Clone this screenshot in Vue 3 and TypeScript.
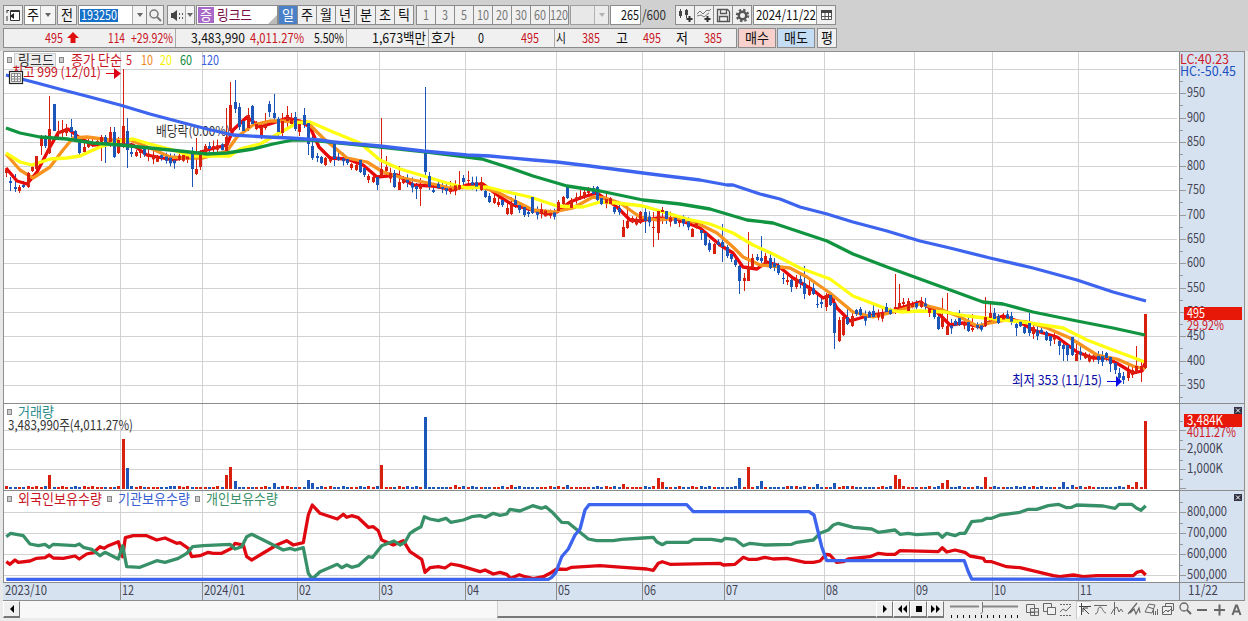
<script setup lang="ts">
import { h } from 'vue'

/* Compact label: one line of text fitted to a fixed advance width */
const Lbl = (p: { s: string; w: number; c?: string }) =>
  h('svg', { class: 'lbl', width: p.w, height: 16, viewBox: `0 0 ${p.w} 16` }, [
    h('text', { x: 0, y: 13, fill: p.c ?? '#111', textLength: p.w, lengthAdjust: 'spacingAndGlyphs' }, p.s),
  ])
Lbl.props = ['s', 'w', 'c']

const RED = '#d8200f'
const BLUE = '#1c56b8'
type Pt = [number, number]

const pairs = (src: string): Pt[] => src.trim().split(/\s+/).map(p => p.split(',').map(Number) as Pt)

/* ---------- grid ---------- */
const gridX = [120, 202, 297, 379, 465, 556, 642, 724, 824, 914, 992, 1078]
const months = ['12', '2024/01', '02', '03', '04', '05', '06', '07', '08', '09', '10', '11']
const gridY = [69, 93, 118, 142, 166, 190, 215, 239, 263, 288, 312, 336, 361, 385]
const prices = gridY.slice(1).map((y, i) => ({ y, v: String(950 - i * 50) }))
const minorY = gridY.map(y => y + 12)
const holdY = [512, 533, 554, 575]

/* ---------- moving averages ---------- */
const ma5 = '6,168 17,181 27,184 37,172 50,147 58,133 68,129 80,138 93,145 110,143 120,145 133,145 147,155 173,160 187,157 207,150 227,145 233,130 247,117 260,127 273,123 287,118 300,121 310,127 319,147 330,158 347,159 363,165 377,177 397,175 413,185 433,186 453,190 467,185 483,184 500,197 513,205 547,214 557,212 570,202 583,197 597,193 617,207 630,220 640,221 657,218 677,219 700,228 720,245 733,253 743,267 757,269 767,262 777,265 793,278 813,290 823,298 830,295 837,308 850,321 867,316 887,313 900,308 920,302 937,312 950,325 963,323 980,327 997,318 1003,316 1020,322 1033,330 1057,337 1077,352 1093,358 1107,358 1120,365 1133,373 1142,371 1145,363'
const ma10 = '6,154 20,170 33,178 50,167 63,150 73,138 87,137 110,140 130,140 150,148 170,157 187,158 203,158 227,151 237,137 253,125 270,121 283,121 297,122 307,122 323,138 347,158 367,162 383,172 403,178 433,184 450,188 480,187 497,192 517,202 533,210 553,212 573,208 593,197 605,198 620,203 640,217 657,220 677,218 697,223 717,233 733,247 743,257 760,265 790,268 807,277 830,293 853,312 873,317 893,312 920,304 940,309 960,317 977,326 990,323 1007,320 1027,322 1047,328 1070,338 1097,355 1117,359 1133,366 1145,369'
const ma20 = '6,153 20,162 32,165 50,159 67,158 80,156 100,147 120,141 133,139 150,144 173,150 190,156 207,156 230,156 240,149 260,144 283,131 297,123 310,122 333,132 360,143 380,160 400,169 427,177 447,183 467,188 487,187 503,191 530,197 557,206 583,207 600,202 617,203 643,206 667,213 687,219 710,224 733,233 753,245 773,254 800,268 830,279 853,296 887,309 900,312 920,311 945,312 967,316 985,318 1003,320 1023,322 1043,325 1063,328 1087,340 1113,350 1145,362'
const ma60 = '6,128 20,133 40,137 67,139 93,143 120,145 150,148 180,151 207,154 227,153 253,149 273,144 293,140 310,140 380,147 427,152 467,157 482,159 507,167 533,176 567,186 600,191 643,200 680,204 710,209 747,220 773,223 800,232 827,241 853,254 887,267 920,279 953,291 983,302 1003,304 1033,312 1077,321 1113,328 1145,335'
const ma120 = '6,75 37,83 63,90 90,97 120,105 150,114 180,122 207,129 233,135 267,137 290,138 320,140 333,142 380,146 423,151 467,155 490,156 533,160 557,162 590,166 643,173 667,176 700,180 727,185 733,185 760,194 780,199 800,207 827,214 853,222 887,231 920,241 950,248 990,258 1033,268 1077,280 1113,292 1146,301'
const averages = [
  { pts: ma5, color: '#e80808' },
  { pts: ma10, color: '#f7931e' },
  { pts: ma20, color: '#ffff10' },
  { pts: ma60, color: '#109440' },
  { pts: ma120, color: '#3c64ee' },
]

/* ---------- candles ---------- */
const COUNT = 265
const slotX = (i: number) => 6.1 + i * 4.314
const slotOf = (x: number) => Math.round((x - 6.1) / 4.314)

/* x high top bottom low, r = up day, b = down day */
const marked = `
6 168 170 173 177 r;11 177 181 183 191 b;15 174 187 189 192 b;19 185 187 191 193 r;23 181 185 187 188 b;28 172 173 187 188 r;32 165 167 171 172 r;36 156 156 169 170 r
41 135 136 146 155 r;45 135 137 146 148 b;49 96 129 153 154 r;54 104 104 131 131 b;58 121 131 134 138 r;62 120 130 133 137 r;67 124 128 133 136 r;71 119 127 132 137 b
75 130 131 140 142 b;80 138 140 153 155 b;84 143 147 152 153 r;88 137 141 147 148 r;92 138 142 145 147 r;97 138 141 145 147 r;101 135 137 143 161 r;105 135 137 143 163 b
109 127 132 142 147 r;114 127 132 157 158 b;118 137 140 153 154 r;123 69 126 147 148 r;127 118 131 150 168 b;131 143 152 154 157 b;136 150 152 156 157 r;140 150 151 153 158 r
192 147 151 169 187 b;196 138 169 174 175 r;200 150 153 167 170 r;204 144 146 153 156 r;209 142 146 149 153 b;226 108 137 151 152 r;231 82 105 131 132 r;235 80 102 109 113 b
239 103 107 127 130 b;243 118 121 131 133 b;248 108 115 128 131 r;252 105 106 124 127 b;257 121 124 129 130 r;261 124 126 137 139 r;265 113 124 128 130 r;269 101 104 112 117 b
274 94 113 118 122 b;278 117 119 132 137 b;282 113 121 133 137 r;286 106 115 121 127 r;291 113 118 124 127 r;295 112 117 129 131 b;299 121 124 132 136 r;304 108 115 125 128 b
308 122 123 144 155 b;312 133 146 158 160 b;317 153 156 158 162 b;321 156 157 163 164 b;325 157 158 165 166 r;334 142 143 159 166 b;339 149 157 160 161 b;347 157 159 163 165 b
351 163 164 168 170 r;356 162 165 170 171 r;360 159 160 172 173 b;364 166 168 175 177 b;368 174 176 180 183 r;373 175 177 182 183 r;377 176 177 185 190 b;381 118 169 177 178 r
386 156 167 171 175 r;394 170 173 187 188 b;398 166 182 190 190 r;403 176 179 183 184 r;416 183 186 189 199 b;420 178 185 189 206 r;425 87 153 172 177 b;429 172 176 187 190 b
433 186 190 192 193 b;442 181 187 189 193 b;451 181 188 192 194 r;459 171 185 189 190 r;464 175 178 182 186 b;468 171 180 181 184 r;481 177 182 190 191 r;486 189 191 197 198 b
490 193 196 202 203 b;494 193 198 203 204 r;498 198 202 205 207 r;502 198 200 205 207 b;507 203 208 214 215 r;511 197 203 214 215 r;515 195 200 205 208 b;519 202 205 210 213 b
524 204 207 215 217 b;528 210 212 214 217 b;533 197 197 213 214 b;559 200 202 211 213 r;563 196 197 204 206 r;568 186 186 198 199 b;572 198 200 208 209 r;580 190 196 199 200 r
584 188 192 197 199 r;588 187 188 193 197 r;593 186 188 194 196 b;597 186 187 200 201 b;601 197 198 204 205 b;614 204 207 212 214 b;623 220 227 237 237 r;628 205 221 228 229 r
640 211 212 223 224 r;644 207 212 221 233 b;654 212 227 228 247 r;658 210 211 233 240 r;662 207 210 212 224 r;666 211 211 219 224 b;679 215 220 223 227 r;692 228 229 237 237 r
701 228 230 233 240 b;705 232 233 245 246 b;709 240 243 250 252 b;713 243 244 254 254 r;722 224 242 247 262 b;726 245 247 256 258 b;731 252 254 259 262 b;735 257 260 265 267 b
739 265 266 281 294 b;744 273 278 281 291 r;748 232 267 281 281 r;752 254 258 268 269 r;757 254 257 260 261 b;761 236 258 261 263 b;765 253 256 264 266 r;769 251 258 268 269 b
778 263 265 273 275 b;783 273 278 279 284 b;787 275 280 282 285 r;791 278 280 287 292 b;796 275 279 287 289 r;804 266 283 294 299 b;808 278 288 295 296 r;813 283 288 294 295 b
817 294 304 305 308 b;822 297 302 304 308 b;826 293 295 307 311 r;830 295 295 305 306 b;834 298 303 333 349 b;838 317 320 341 342 r;843 316 317 335 336 r;847 307 317 324 325 b
851 312 316 326 327 r;856 309 310 314 316 b;860 307 309 315 316 b;873 303 311 317 318 b;886 303 307 312 313 b;895 274 307 309 314 r;900 284 303 308 309 r;904 298 302 304 308 r
908 298 301 311 312 r;921 297 301 307 308 r;930 306 309 313 317 r;934 308 310 317 319 b;938 313 317 329 330 b;942 298 318 327 329 r;947 293 326 335 335 r;960 310 318 325 326 b
968 317 322 331 332 b;973 314 328 330 332 r;985 297 317 326 327 r;990 303 313 318 320 r;995 308 313 319 320 b;999 314 316 323 324 b;1016 320 324 328 336 b;1024 324 327 333 334 b
1029 313 323 333 336 b;1033 323 327 334 339 r;1046 331 332 340 341 b;1050 334 336 341 346 b;1059 337 341 346 355 b;1064 343 345 349 361 b;1068 343 345 355 361 b;1072 337 337 355 356 b
1077 344 354 361 361 r;1107 352 353 358 361 b;1111 356 357 364 372 b;1115 361 363 370 374 b;1119 368 373 378 382 b;1123 372 376 380 384 b;1128 365 371 378 381 r;1132 366 370 375 378 r;1137 346 366 373 374 r;1141 362 366 370 382 r;1145 314 314 368 369 r`

interface Candle { x: number; hi: number; top: number; bot: number; lo: number; up: boolean }

const shortTerm = pairs(ma5)
const trendAt = (x: number) => {
  const k = Math.max(1, shortTerm.findIndex(p => p[0] >= x))
  const [a, b] = [shortTerm[k - 1], shortTerm[k]]
  return a[1] + ((b[1] - a[1]) * (x - a[0])) / (b[0] - a[0])
}
const candles: Candle[] = Array.from({ length: COUNT }, (_, i) => {
  const x = Math.round(slotX(i))
  const mid = trendAt(Math.min(1144, x)) + ((i * 5) % 4) - 1
  const half = 1.5 + ((i * 7) % 3) * 0.7
  const reach = 4 + ((i * 11) % 5)
  return { x, hi: mid - reach, top: mid - half, bot: mid + half, lo: mid + reach - 1, up: (i * 13) % 7 < 3 }
})
marked.trim().split(/[;\n]/).forEach(row => {
  const [x, hi, top, bot, lo, kind] = row.split(' ')
  const i = Math.min(COUNT - 1, slotOf(+x))
  candles[i] = { x: Math.round(slotX(i)), hi: +hi, top: +top, bot: +bot, lo: +lo, up: kind === 'r' }
})

/* ---------- volume ---------- */
const peaks = pairs('50,475 123,439 127,468 226,475 231,467 235,481 274,483 308,480 312,483 381,465 425,417 624,484 658,478 662,482 739,478 748,467 761,481 817,484 834,483 895,475 900,479 942,483 947,480 985,477 1064,482 1137,482 1145,421')
const peakTop = new Map(peaks.map(([x, y]) => [slotOf(x), y]))
const volumes = candles.map((c, i) => {
  const top = peakTop.get(i) ?? 487 - ((i * 17) % 11 > 7 ? 1 : 0) - ((i * 5) % 13 === 0 ? 1 : 0)
  return { x: c.x, top, h: 489 - top, up: c.up }
})

/* ---------- holdings (third-pixel units, three consecutive windows) ---------- */
const join = (a: string, b: string, c: string) =>
  [a, b, c].flatMap((s, k) => pairs(s).map(([x, y]) => `${((x + k * 1230) / 3).toFixed(1)},${(400 + y / 3).toFixed(1)}`)).join(' ')
const foreign = join(
  '19,485 30,493 45,480 55,487 90,483 110,475 135,473 148,465 160,474 190,475 225,468 238,477 260,462 280,458 300,440 312,445 325,437 355,425 368,470 376,413 400,407 440,407 470,420 495,414 530,430 540,428 565,445 575,470 600,467 625,457 640,460 665,460 695,445 705,430 730,435 740,470 755,480 780,465 830,435 860,422 880,435 910,428 925,345 937,315 960,340 1012,357 1030,343 1040,352 1055,347 1075,353 1105,382 1120,380 1135,392 1145,420 1180,435 1210,422',
  '0,455 35,478 45,517 60,503 85,500 105,504 123,492 150,497 210,515 225,510 250,522 270,517 290,523 302,535 328,524 345,530 370,536 400,530 420,520 440,507 470,508 485,502 570,497 640,502 710,507 730,511 745,490 757,485 780,493 930,490 940,495 975,493 1000,472 1015,478 1040,478 1065,472 1090,477 1130,475 1185,487 1210,487',
  '0,483 18,463 30,465 50,487 70,485 85,477 150,470 175,460 200,463 225,463 240,452 355,455 367,443 380,456 405,450 435,457 450,468 490,475 495,484 515,485 560,500 600,503 700,527 720,530 760,525 790,530 830,527 940,527 950,517 965,513 977,525')
const retail = join(
  '19,410 32,400 70,407 90,432 115,437 135,433 148,442 160,433 225,437 238,432 250,442 275,448 300,467 315,457 355,477 368,437 380,500 420,502 470,482 495,487 535,475 560,460 578,440 610,437 690,433 705,447 725,440 740,410 755,403 820,435 850,450 870,445 885,450 910,443 925,520 937,537 960,515 1012,493 1025,503 1040,495 1055,502 1075,497 1105,470 1118,472 1145,437 1182,423 1200,435 1215,427',
  '0,400 15,390 33,380 43,350 60,357 85,362 108,355 122,367 160,360 185,350 210,347 227,352 250,340 270,346 290,342 300,328 330,333 368,317 395,325 407,320 425,335 455,367 475,368 535,417 560,422 610,422 635,418 700,414 730,412 740,425 757,434 770,427 835,427 850,418 905,418 935,423 945,415 975,418 1000,437 1020,430 1065,435 1145,433 1160,427 1210,420',
  '0,400 25,390 40,375 55,370 100,382 155,387 175,397 225,390 240,403 265,400 290,404 355,400 367,412 380,400 405,407 420,400 435,400 455,365 485,362 500,355 515,355 540,345 600,337 625,328 650,328 685,317 715,313 740,323 755,322 770,315 850,318 885,325 897,313 935,313 950,325 963,331 977,317')
const institution = join('19,538 1200,538', '415,538 425,532 438,517 455,470 475,447 495,405 510,387 525,330 537,314 830,314 850,335 1197,335 1212,345', '5,440 20,482 433,482 445,515 455,537 977,538')

const minutes = ['1', '3', '5', '10', '20', '30', '60', '120']
const sliderTicks = Array.from({ length: 12 }, (_, i) => 2 + i * 6)
</script>

<template>
  <main class="app">
    <header class="tools">
      <button class="btn w19"><svg width="15" height="14"><path d="M1 2v3m0 3v5M1 2.5h2" stroke="#333" /><path d="M4.5 2.500h9v10h-9z M5 3.500h8" fill="#fff" stroke="#333" /><path d="M8 5v6L4 8z" fill="#222" /></svg></button>
      <div class="btn combo"><span class="c17"><Lbl s="주" :w="12" /></span><span class="drop"><i class="tri" /></span></div>
      <button class="btn w19 g1"><Lbl s="전" :w="12" /></button>
      <div class="btn code"><span class="sel"><Lbl s="193250" :w="36" c="#fff" /></span><span class="drop end"><i class="tri" /></span></div>
      <button class="btn w17"><svg width="13" height="13"><circle cx="5" cy="5" r="4" fill="none" stroke="#777" stroke-width="1.500" /><path d="M8 8l4 4" stroke="#777" stroke-width="2" /></svg></button>
      <button class="btn speak"><svg width="14" height="13"><path d="M1 4h2l4-3v11L3 9H1z" fill="#444" /><path d="M9.500 4v2m0 2v2M12.500 4v2m0 2v2" stroke="#555" /></svg><span class="drop sm"><i class="tri" /></span></button>
      <div class="btn name"><b><Lbl s="증" :w="12" c="#fff" /></b><Lbl s="링크드" :w="35" c="#7a0c46" /><i class="corner" /></div>
      <nav class="seg first"><button class="on"><Lbl s="일" :w="12" c="#fff" /></button><button v-for="p in ['주', '월', '년']" :key="p"><Lbl :s="p" :w="12" /></button></nav>
      <nav class="seg"><button v-for="p in ['분', '초', '틱']" :key="p"><Lbl :s="p" :w="12" /></button></nav>
      <nav class="seg off"><button v-for="m in minutes" :key="m"><Lbl :s="m" :w="m.length * 6" c="#777" /></button></nav>
      <div class="btn blank"><span class="drop end"><i class="tri" /></span></div>
      <div class="btn count"><Lbl s="265" :w="18" /></div>
      <Lbl class="total" s="/600" :w="24" c="#333" />
      <nav class="seg icons">
        <button><svg width="16" height="15"><path d="M3.500 1v9M9.500 1v9" stroke="#444" /><path d="M2 3h3v5H2zM8 2h3v5H8z" fill="#444" /><path d="M12.500 8v6M9.500 11h6" stroke="#333" stroke-width="2" /></svg></button>
        <button><svg width="16" height="15" fill="none"><path d="M1 6l3-3 3 3 4-4 2 1 2-2M1 8l4-1 3 2 5-4" stroke="#777" /><path d="M11.500 8v6M8.500 11h6" stroke="#333" stroke-width="2" /></svg></button>
        <button><svg width="15" height="15" fill="none" stroke="#555" stroke-width="1.300"><path d="M1.500 1.500h10l2 2v10h-12zM4.500 1.500v4h6v-4M3.500 13.500v-5h8v5" /></svg></button>
        <button><svg width="15" height="15" fill="none" stroke="#555"><circle cx="7.500" cy="7.500" r="3.700" stroke-width="2.400" /><circle cx="7.500" cy="7.500" r="5.700" stroke-width="2" stroke-dasharray="2.300 2.180" /></svg></button>
      </nav>
      <div class="btn date"><Lbl s="2024/11/22" :w="60" /><span class="cal"><svg width="13" height="12"><path d="M1.500 1.500h10v9h-10zM1.500 7.500h10M5 4v6M8.500 4v6" fill="#fff" stroke="#555" /><path d="M1 1h11v3H1z" fill="#444" /></svg></span></div>
    </header>

    <section class="quote">
      <div class="cells">
        <span><Lbl s="495" :w="18" c="#c8141e" /></span>
        <span><svg width="14" height="14"><path d="M7 1l6 6H9.500v5h-5V7H1z" fill="#e01010" /></svg></span>
        <span><Lbl s="114" :w="17" c="#c8141e" /></span>
        <span class="pr2"><Lbl s="+29.92%" :w="42" c="#c8141e" /></span>
        <span class="rule"><Lbl s="3,483,990" :w="54" /></span>
        <span><Lbl s="4,011.27%" :w="54" c="#c8141e" /></span>
        <span class="pr2"><Lbl s="5.50%" :w="30" /></span>
        <span class="rule pr2"><Lbl s="1,673백만" :w="54" /></span>
        <span class="rule"><Lbl s="호가" :w="24" /></span>
        <span><Lbl s="0" :w="6" /></span>
        <span class="pr15"><Lbl s="495" :w="18" c="#c8141e" /></span>
        <span class="rule"><Lbl s="시" :w="10" /></span>
        <span><Lbl s="385" :w="18" c="#c8141e" /></span>
        <span><Lbl s="고" :w="12" /></span>
        <span><Lbl s="495" :w="18" c="#c8141e" /></span>
        <span><Lbl s="저" :w="12" /></span>
        <span><Lbl s="385" :w="18" c="#c8141e" /></span>
      </div>
      <button class="btn buy"><Lbl s="매수" :w="24" /></button>
      <button class="btn ask"><Lbl s="매도" :w="24" /></button>
      <button class="btn w19 eval"><Lbl s="평" :w="12" /></button>
    </section>

    <section class="charts">
      <svg class="panel" width="1241" height="352" viewBox="3 52 1241 352">
        <rect x="1179" y="52" width="65" height="352" class="axis" />
        <path class="grid" :d="gridY.map(y => `M4 ${y + .5}H1177`).join('') + gridX.map(x => `M${x + .5} 52V403`).join('')" />
        <path class="tick" :d="prices.map(p => `M1180 ${p.y + .5}h6`).join('') + minorY.map(y => `M1180 ${y + .5}h3`).join('')" />
        <text x="156" y="136" textLength="74" fill="#333" lengthAdjust="spacingAndGlyphs">배당락(0.00%)</text>
        <g v-for="(c, i) in candles" :key="i" :fill="c.up ? RED : BLUE">
          <rect :x="c.x" :y="c.hi" width="1" :height="c.lo - c.hi" />
        </g>
        <polyline v-for="m in averages.slice(0, 3)" :key="m.color" class="ma" :points="m.pts" :stroke="m.color" />
        <g v-for="(c, i) in candles" :key="'b' + i" :fill="c.up ? RED : BLUE">
          <rect :x="c.x - 1" :y="c.top" width="3" :height="c.bot - c.top" />
        </g>
        <polyline v-for="m in averages.slice(3)" :key="m.color" class="ma" :points="m.pts" :stroke="m.color" />
        <g class="bullet"><rect x="7.500" y="57.500" width="4" height="5" /><rect x="59.500" y="57.500" width="4" height="5" /></g>
        <rect x="14.500" y="53.500" width="41" height="13" fill="#eee" stroke="#ccc" />
        <text x="18" y="65" textLength="36" lengthAdjust="spacingAndGlyphs" fill="#333">링크드</text>
        <text x="71" y="65" textLength="51" lengthAdjust="spacingAndGlyphs" fill="#c8141e">종가 단순</text>
        <text x="126" y="65" textLength="6" lengthAdjust="spacingAndGlyphs" fill="#c8141e">5</text>
        <text x="141" y="65" textLength="12" lengthAdjust="spacingAndGlyphs" fill="#f08820">10</text>
        <text x="160" y="65" textLength="12" lengthAdjust="spacingAndGlyphs" fill="#f7f200">20</text>
        <text x="180" y="65" textLength="12" lengthAdjust="spacingAndGlyphs" fill="#108a38">60</text>
        <text x="201" y="65" textLength="18" lengthAdjust="spacingAndGlyphs" fill="#3860e0">120</text>
        <text x="12" y="77" textLength="89" lengthAdjust="spacingAndGlyphs" fill="#c8141e">최고 999 (12/01)</text>
        <path d="M106 73h8v-5l7 5.500-7 5.500v-5h-8z" fill="#e00018" />
        <rect x="9.500" y="71.500" width="13" height="12" fill="#f4f4f4" stroke="#222" stroke-width="1.200" />
        <path d="M11.500 73.500h9v8h-9zM14.500 73.500v8M17.500 73.500v8M11.500 76.500h9M11.500 79h9" fill="none" stroke="#888" />
        <text x="1012" y="385" textLength="90" lengthAdjust="spacingAndGlyphs" fill="#0a0aa8">최저 353 (11/15)</text>
        <path d="M1107 381h9v-5l6 5.500-6 5.500v-5h-9z" fill="#0808e8" />
        <text v-for="p in prices" :key="p.v" x="1187" :y="p.y + 4" textLength="18" lengthAdjust="spacingAndGlyphs" fill="#445">{{ p.v }}</text>
        <rect x="1184" y="307" width="58" height="13" fill="#e81808" />
        <text x="1187" y="318" textLength="18" lengthAdjust="spacingAndGlyphs" fill="#fff">495</text>
        <text x="1187" y="330" textLength="37" lengthAdjust="spacingAndGlyphs" fill="#d01828">29.92%</text>
        <text x="1180" y="64" textLength="49" lengthAdjust="spacingAndGlyphs" fill="#d01828">LC:40.23</text>
        <text x="1180" y="76" textLength="56" lengthAdjust="spacingAndGlyphs" fill="#1c50c0">HC:-50.45</text>
        <path class="edge" d="M1179.500 52V404M3 403.500H1244" />
      </svg>
      <svg class="panel" width="1241" height="87" viewBox="3 404 1241 87">
        <rect x="1179" y="404" width="65" height="87" class="axis" />
        <path class="grid" :d="[430, 449, 469].map(y => `M4 ${y + .5}H1177`).join('') + gridX.map(x => `M${x + .5} 404V490`).join('')" />
        <path class="tick" d="M1180 430.500h6m-6 19h6m-6 20h6m-6 19h6M1180 421.500h3m-3 19h3m-3 20h3m-3 19h3" />
        <rect v-for="(v, i) in volumes" :key="i" :x="v.x - 1" :y="v.top" width="3" :height="v.h" :fill="v.up ? RED : BLUE" />
        <g class="bullet"><rect x="7.500" y="409.500" width="4" height="5" /></g>
        <text x="18" y="417" textLength="36" lengthAdjust="spacingAndGlyphs" fill="#2c8c8c">거래량</text>
        <text x="8" y="430" textLength="125" lengthAdjust="spacingAndGlyphs" fill="#333">3,483,990주(4,011.27%)</text>
        <rect x="1184" y="414" width="58" height="13" fill="#e81808" />
        <text x="1187" y="425" textLength="36" lengthAdjust="spacingAndGlyphs" fill="#fff">3,484K</text>
        <text x="1187" y="437" textLength="49" lengthAdjust="spacingAndGlyphs" fill="#d01828">4011.27%</text>
        <text x="1187" y="453" textLength="36" lengthAdjust="spacingAndGlyphs" fill="#445">2,000K</text>
        <text x="1187" y="473" textLength="36" lengthAdjust="spacingAndGlyphs" fill="#445">1,000K</text>
        <rect x="1234" y="407" width="8" height="7" fill="#334" /><path d="M1236 408.500l4 4m0-4l-4 4" stroke="#fff" />
        <path class="edge" d="M1179.500 404V491M3 490.500H1244" />
      </svg>
      <svg class="panel" width="1241" height="92" viewBox="3 491 1241 92">
        <rect x="1179" y="491" width="65" height="92" class="axis" />
        <path class="grid" :d="holdY.map(y => `M4 ${y + .5}H1177`).join('') + gridX.map(x => `M${x + .5} 491V582`).join('')" />
        <path class="tick" :d="holdY.map(y => `M1180 ${y + .5}h6m-6 -10h3`).join('')" />
        <polyline class="ma" :points="foreign" stroke="#e00810" />
        <polyline class="ma" :points="retail" stroke="#389068" />
        <polyline class="ma" :points="institution" stroke="#3c64ee" />
        <g class="bullet"><rect x="7.500" y="496.500" width="4" height="5" /><rect x="107.500" y="496.500" width="4" height="5" /><rect x="195.500" y="496.500" width="4" height="5" /></g>
        <text x="18" y="504" textLength="84" lengthAdjust="spacingAndGlyphs" fill="#c8141e">외국인보유수량</text>
        <text x="118" y="504" textLength="72" lengthAdjust="spacingAndGlyphs" fill="#3860d0">기관보유수량</text>
        <text x="206" y="504" textLength="72" lengthAdjust="spacingAndGlyphs" fill="#389068">개인보유수량</text>
        <text v-for="(y, i) in holdY" :key="y" x="1187" :y="y + 4" textLength="40" lengthAdjust="spacingAndGlyphs" fill="#445">{{ 8 - i }}00,000</text>
        <rect x="1234" y="494" width="8" height="7" fill="#334" /><path d="M1236 495.500l4 4m0-4l-4 4" stroke="#fff" />
        <path class="edge" d="M1179.500 491V583M3 582.500H1244" />
      </svg>
      <svg class="panel" width="1241" height="18" viewBox="3 583 1241 18">
        <rect x="3" y="583" width="1241" height="18" class="axis" />
        <path class="edge" :d="gridX.map(x => `M${x + .5} 583V600`).join('') + 'M1179.500 583V600M3 600.500H1244'" />
        <text x="5" y="595" textLength="42" lengthAdjust="spacingAndGlyphs" fill="#445">2023/10</text>
        <text v-for="(m, i) in months" :key="m" :x="gridX[i] + 2" y="595" :textLength="m.length > 2 ? 41 : 12" lengthAdjust="spacingAndGlyphs" fill="#445">{{ m }}</text>
        <text x="1188" y="595" textLength="30" lengthAdjust="spacingAndGlyphs" fill="#445">11/22</text>
      </svg>
    </section>

    <footer class="bar">
      <button class="key"><svg width="8" height="8"><path d="M6 0v8L2 4z" /></svg></button>
      <div class="track"><div class="thumb" /></div>
      <button class="key"><svg width="8" height="8"><path d="M2 0v8l4-4z" /></svg></button>
      <button class="key"><svg width="10" height="8"><path d="M5 0v8L1 4zM10 0v8L6 4z" /></svg></button>
      <button class="key"><svg width="8" height="8"><path d="M1 1h6v6H1z" /></svg></button>
      <button class="key"><svg width="10" height="8"><path d="M0 0v8l4-4zM5 0v8l4-4z" /></svg></button>
      <svg class="slider" width="70" height="19"><path d="M1 5.500h68" stroke="#888" stroke-width="2" /><path d="M30 1h4v9l-2 2-2-2z" fill="#eee" /><path d="M33.500 1v10l-2 2" fill="none" stroke="#777" /><path :d="sliderTicks.map(x => `M${x + .5} 14v3`).join('')" stroke="#111" /></svg>
      <svg class="draw" width="221" height="19" viewBox="1025 601 221 19" fill="none" stroke="#666">
        <path d="M1026.500 604.500h8v8h-8zM1030.500 608.500h8v7h-8zM1034.500 608.500v7M1030.500 612h8" />
        <path d="M1043.500 603.500h8v8h-8z" /><path d="M1047.500 607.500h8v7h-8z" fill="#f0f0f0" />
        <path d="M1060 604.500h12M1060 615.500h12" stroke-dasharray="2 1" /><path d="M1060 612l3-3 3 2 5-5" />
        <path d="M1076.500 619v-17.500h15" fill="#fbfbfb" stroke="#ccc" /><path d="M1079 606.500h12M1081.500 603v12M1083 608l6 6M1083 612v-4h5" stroke="#444" />
        <path d="M1094 605.500h13M1095 614c4 0 2-7 5-7s2 5 6 6" />
        <path d="M1114.500 602v13M1111 614l3-5 3-2 2 5 2-3 2 3" />
        <path d="M1128 614l9-11M1130 613l4-4 2 5 3-6 1 5" stroke-width="1.200" />
        <path d="M1145 612l4-8 6 1-3 8zM1148 607l6 2M1153.500 610v5m2-4v4m2-6v6" />
        <path d="M1165.500 603.500h8v7h-8z" /><path d="M1162.500 606.500h9v8h-9zM1163 613l3-3 2 2 3-3" fill="#f0f0f0" />
        <circle cx="1184" cy="607" r="4" stroke-width="1.300" /><path d="M1187 610l4 4" stroke-width="2" />
        <path d="M1197 610h10M1214 610h11M1219.500 604.500v11" stroke-width="2" />
        <path d="M1232.500 615l3.500-9.500h1l3.500 9.500M1234 611.500h5" stroke-width="2" />
      </svg>
    </footer>
  </main>
</template>

<style>
body { margin: 0; overflow: hidden; background: #e8e8e8; }
</style>

<style scoped>
.app { width: 1248px; height: 621px; box-sizing: border-box; background: #d0d0d0; overflow: hidden; font-family: "Noto Sans CJK KR", "Liberation Sans", sans-serif; font-size: 13px; display: flex; flex-direction: column; }
svg { display: block; flex: none; }
text { font-size: 13.5px; }
button { padding: 0; font: inherit; font-size: 13.5px; }
.lbl { overflow: visible; font-size: 13.5px; }
.tools { display: flex; height: 20px; padding: 5px 0 0 3px; }
.btn { box-sizing: border-box; height: 20px; border: 1px solid #8c8c8c; background: #f0f0f0; display: flex; align-items: center; justify-content: center; flex: none; }
.w19 { width: 20px; }
.w17 { width: 18px; margin-left: -1px; }
.g1 { margin-left: 1px; }
.combo { width: 32px; margin-left: 1px; background: #fff; }
.c17 { flex: 1; display: flex; justify-content: center; }
.drop { width: 14px; height: 18px; border-left: 1px solid #aaa; background: #f4f4f4; display: flex; align-items: center; justify-content: center; }
.drop.end { margin-left: auto; width: 13px; }
.drop.sm { width: 8px; }
.tri { border: 3.5px solid transparent; border-top: 4px solid #666; border-bottom: 0; }
.code { width: 69px; margin-left: 1px; background: #fff; }
.sel { background: #1670c8; height: 13px; margin-left: 1px; display: flex; align-items: center; padding: 0 1px; }
.speak { width: 28px; margin-left: 3px; justify-content: flex-end; gap: 1px; }
.name { width: 82px; margin-left: 1px; background: #fff; justify-content: flex-start; gap: 3px; }
.name b { width: 16px; height: 16px; margin-left: 1px; background: #a868c8; display: flex; align-items: center; justify-content: center; font-weight: 400; }
.corner { margin-left: auto; align-self: flex-end; border-left: 9px solid transparent; border-bottom: 9px solid #bbb; }
.seg { display: flex; margin-left: 1px; border: 1px solid #8c8c8c; border-right: 0; height: 18px; flex: none; }
.seg.first { margin-left: 0; }
.seg button { width: 19px; height: 18px; box-sizing: border-box; border: 0; border-right: 1px solid #8c8c8c; background: #f0f0f0; display: flex; align-items: center; justify-content: center; }
.seg .on { background: #4a80c8; }
.seg.off { margin-left: 2px; }
.blank { width: 39px; margin-left: 1px; opacity: .75; }
.blank .tri { border-top-color: #aaa; }
.count { width: 31px; margin-left: 1px; background: #fff; justify-content: flex-end; padding-right: 1px; }
.total { margin: 2px 0 0 1px; }
.icons { margin-left: 9px; }
.date { width: 83px; margin-left: 1px; background: #fff; justify-content: space-between; padding-left: 2px; }
.cal { width: 18px; height: 18px; background: #f0f0f0; border-left: 1px solid #999; display: flex; align-items: center; justify-content: center; }
.quote { display: flex; height: 20px; padding: 3px 0 0 3px; }
.cells { box-sizing: border-box; width: 734px; height: 20px; border: 1px solid #8c8c8c; background: #f0f0f0; display: grid; grid-template-columns: 59px 17px 45px 50px 70px 59px 42px 82px 27px 29px 70px 12px 34px 28px 33px 27px 34px; }
.cells span { display: flex; align-items: center; justify-content: flex-end; height: 18px; box-sizing: border-box; }
.rule { border-left: 1px solid #a8a8a8; }
.pr2 { padding-right: 2px; }
.pr15 { padding-right: 15px; }
.buy { width: 38px; margin-left: 1px; background: #f8d0cc; }
.ask { width: 38px; margin-left: 1px; background: #c4dcf4; }
.eval { margin-left: 2px; }
.charts { margin: 3px 0 0 3px; width: 1241px; border: solid #909090; border-width: 1px 1px 0 0; background: #fff; box-shadow: 3px 0 0 #e8e8e8, -3px 0 0 #e8e8e8; border-left: 0; }
.panel { background: #fff; box-shadow: inset 1px 0 #909090; overflow: visible; }
.axis { fill: #d6e2f0; }
.grid { stroke: #d2d2d2; fill: none; shape-rendering: crispEdges; }
.tick { stroke: #999; fill: none; }
.edge { stroke: #8c8c8c; fill: none; shape-rendering: crispEdges; }
.ma { fill: none; stroke-width: 3.3; stroke-linejoin: round; }
.bullet { fill: #ccc; stroke: #888; }
.bar { display: flex; flex: 1; background: #ececec; padding-left: 3px; }
.key { box-sizing: border-box; width: 17px; height: 17px; background: #f0f0f0; border: 1px solid #fff; border-right-color: #777; border-bottom: 2px solid #777; display: flex; align-items: center; justify-content: center; }
.track { width: 856px; height: 17px; background: #f8f8f8; display: flex; justify-content: flex-end; }
.thumb { width: 378px; height: 15px; background: #f0f0f0; border-bottom: 2px solid #777; border-left: 1px solid #ccc; }
.slider { margin-left: 5px; }
.draw { margin-left: 6px; }
</style>
